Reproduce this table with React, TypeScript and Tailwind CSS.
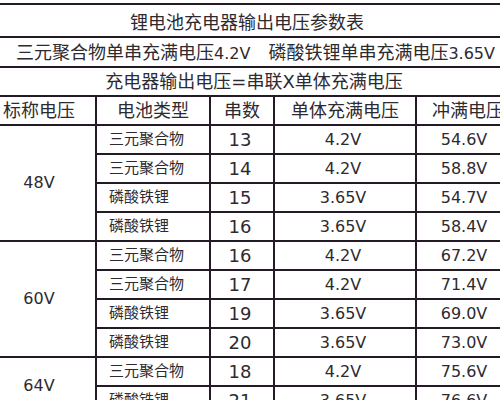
const groups = [
  {
    nominal: "48V",
    rows: [
      ["三元聚合物", "13", "4.2V", "54.6V"],
      ["三元聚合物", "14", "4.2V", "58.8V"],
      ["磷酸铁锂", "15", "3.65V", "54.7V"],
      ["磷酸铁锂", "16", "3.65V", "58.4V"],
    ],
  },
  {
    nominal: "60V",
    rows: [
      ["三元聚合物", "16", "4.2V", "67.2V"],
      ["三元聚合物", "17", "4.2V", "71.4V"],
      ["磷酸铁锂", "19", "3.65V", "69.0V"],
      ["磷酸铁锂", "20", "3.65V", "73.0V"],
    ],
  },
  {
    nominal: "64V",
    rows: [
      ["三元聚合物", "18", "4.2V", "75.6V"],
      ["磷酸铁锂", "21", "3.65V", "76.6V"],
    ],
  },
]

const cell = "border-2 border-[#241a26] p-0"

export default function App() {
  return (
    <div
      className="w-[500px] h-[400px] overflow-hidden bg-white text-[#2e2a2f]"
      style={{ fontFamily: '"DejaVu Sans", "Noto Sans CJK SC", sans-serif' }}
    >
      <table className="ml-[-19px] mt-[3px] w-[530px] border-collapse table-fixed">
        <colgroup>
          <col className="w-[114px]" />
          <col className="w-[114px]" />
          <col className="w-[64px]" />
          <col className="w-[142px]" />
          <col className="w-[96px]" />
        </colgroup>
        <tbody>
          <tr className="h-[33px]">
            <td colSpan={5} className={`${cell} text-center text-[18px] pt-[3px]`}>
              锂电池充电器输出电压参数表
            </td>
          </tr>
          <tr className="h-[30px]">
            <td colSpan={5} className={`${cell} text-[18px] pl-[33px] whitespace-nowrap`}>
              三元聚合物单串充满电压<span className="text-[16px]">4.2V</span>
              <span className="inline-block w-[18px]" />
              磷酸铁锂单串充满电压<span className="text-[16px]">3.65V</span>
            </td>
          </tr>
          <tr className="h-[29px]">
            <td colSpan={5} className={`${cell} text-center text-[18px] pl-[14px]`}>
              充电器输出电压=串联X单体充满电压
            </td>
          </tr>
          <tr className="h-[29px] text-[18px] text-center">
            <td className={cell}>标称电压</td>
            <td className={cell}>电池类型</td>
            <td className={cell}>串数</td>
            <td className={cell}>单体充满电压</td>
            <td className={`${cell} pl-[8px]`}>冲满电压</td>
          </tr>
          {groups.map((g) =>
            g.rows.map((r, i) => (
              <tr key={g.nominal + i} className="h-[28.4px]">
                {i === 0 && (
                  <td rowSpan={g.rows.length} className={`${cell} text-center text-[16px]`}>
                    {g.nominal}
                  </td>
                )}
                <td className={`${cell} pl-[12px] text-[15px]`}>{r[0]}</td>
                <td className={`${cell} text-center text-[18px] pr-[4px]`}>{r[1]}</td>
                <td className={`${cell} text-center text-[16px] pr-[4px]`}>{r[2]}</td>
                <td className={`${cell} text-center text-[16px]`}>{r[3]}</td>
              </tr>
            ))
          )}
        </tbody>
      </table>
    </div>
  )
}
